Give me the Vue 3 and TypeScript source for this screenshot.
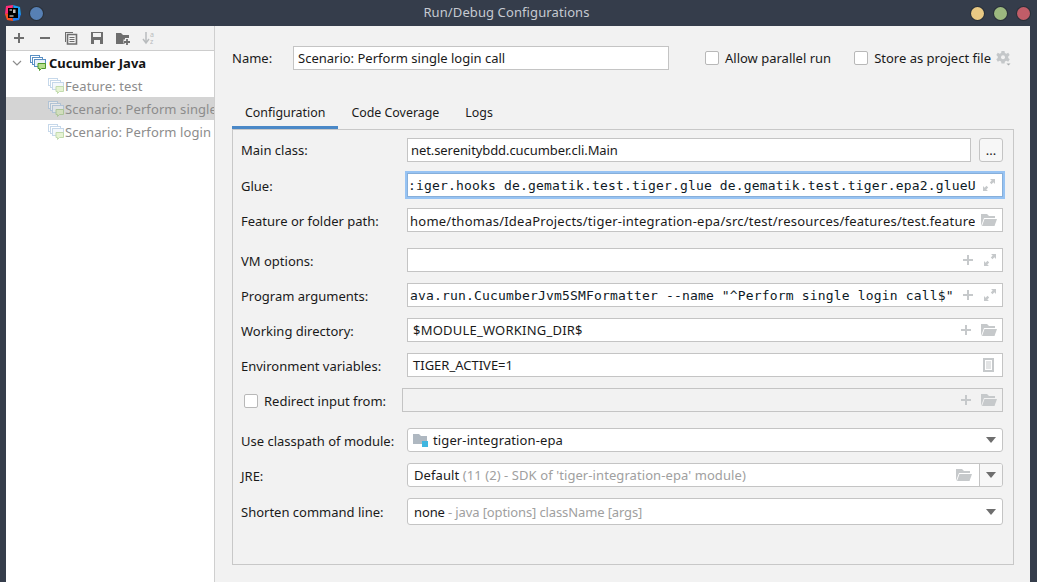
<script setup lang="ts">
const tabs = ["Configuration", "Code Coverage", "Logs"];
const treeChildren = [
  { label: "Feature: test", selected: false },
  { label: "Scenario: Perform single", selected: true },
  { label: "Scenario: Perform login", selected: false },
];
</script>

<template>
  <div class="window">
    <header class="titlebar">
      <div class="title-left">
        <svg class="app-logo" width="16" height="16" viewBox="0 0 16 16">
          <path d="M1 1 L8 0 L7 8 L0 9 Z" fill="#ff2d78" />
          <path d="M8 0 L15 2 L16 10 L10 9 Z" fill="#1b9cf0" />
          <path d="M0 9 L7 8 L8 16 L2 15 Z" fill="#f9501e" />
          <path d="M8 8 L16 9 L14 15 L8 16 Z" fill="#1b7cf0" />
          <rect x="3" y="3" width="10" height="10" fill="#000" />
          <rect x="4.500" y="10.500" width="4" height="1" fill="#fff" />
          <rect x="4.500" y="4.500" width="2.500" height="1" fill="#fff" />
          <rect x="8" y="4.500" width="2.500" height="3.500" fill="#fff" opacity="0.75" />
        </svg>
        <span class="pin"></span>
      </div>
      <div class="title-text">Run/Debug Configurations</div>
      <div class="win-buttons">
        <span class="dot yellow"></span>
        <span class="dot green"></span>
        <span class="dot red"></span>
      </div>
    </header>

    <div class="body">
      <aside class="sidebar">
        <div class="toolbar">
          <svg width="16" height="16" viewBox="0 0 16 16"><path d="M8 3v10M3 8h10" stroke="#6e6e6e" stroke-width="2" /></svg>
          <svg width="16" height="16" viewBox="0 0 16 16"><path d="M3 8h10" stroke="#6e6e6e" stroke-width="2" /></svg>
          <svg width="16" height="16" viewBox="0 0 16 16"><path d="M2 2h8v1H3v9H2z" fill="#6e6e6e" /><path d="M4.500 4.500h9v9.500h-9z" fill="none" stroke="#6e6e6e" stroke-width="1.600" /><path d="M6.500 7.500h5M6.500 9.500h5M6.500 11.500h5" stroke="#6e6e6e" /></svg>
          <svg width="16" height="16" viewBox="0 0 16 16"><path d="M2 2h12v12H2z" fill="#6e6e6e" /><rect x="4" y="3" width="8" height="4" fill="#f2f2f2" /><rect x="5" y="10" width="6" height="4" fill="#f2f2f2" /></svg>
          <svg width="16" height="16" viewBox="0 0 16 16"><path d="M1 3h5l2 2h6v9H1z" fill="#6e6e6e" /><path d="M12 8v7M8.500 11.500h7" stroke="#f2f2f2" stroke-width="4" /><path d="M12 9v6M9 12h6" stroke="#6e6e6e" stroke-width="1.800" /></svg>
          <div class="sort-icon">
            <svg width="16" height="16" viewBox="0 0 16 16"><path d="M5 2v10M2 9l3 4 3-4" fill="none" stroke="#b9bcbe" stroke-width="1.500" /></svg>
            <span class="sort-a">a</span>
            <span class="sort-z">z</span>
          </div>
        </div>
        <div class="tree">
          <div class="tree-row root">
            <svg class="chevron" width="10" height="6" viewBox="0 0 10 6"><path d="M1 1l4 4 4-4" fill="none" stroke="#8c8c8c" stroke-width="1.200" /></svg>
            <svg class="cfg-icon" width="16" height="16" viewBox="0 0 16 16">
              <rect x="0.500" y="0.500" width="9" height="7" fill="#fff" stroke="#5a90c4" />
              <rect x="2.500" y="2.500" width="10" height="7" fill="#fff" stroke="#5a90c4" />
              <rect x="4.500" y="4.500" width="11" height="7" fill="#eaf2fa" stroke="#5a90c4" />
              <path d="M8 8.500h7.500v5h-4l-2 2v-2H8z" fill="#b5de8c" stroke="#4d9a2a" />
            </svg>
            <span>Cucumber Java</span>
          </div>
          <div
            v-for="item in treeChildren"
            :key="item.label"
            class="tree-row child"
            :class="{ selected: item.selected }"
          >
            <svg class="cfg-icon" width="16" height="16" viewBox="0 0 16 16" opacity="0.5">
              <rect x="0.500" y="0.500" width="9" height="7" fill="#fff" stroke="#8fb3d6" />
              <rect x="2.500" y="2.500" width="10" height="7" fill="#fff" stroke="#8fb3d6" />
              <rect x="4.500" y="4.500" width="11" height="7" fill="#eaf2fa" stroke="#8fb3d6" />
              <path d="M8 8.500h7.500v5h-4l-2 2v-2H8z" fill="#cfe8a8" stroke="#86b860" />
            </svg>
            <span class="child-label">{{ item.label }}</span>
          </div>
        </div>
      </aside>

      <main class="content">
        <div class="name-row">
          <label class="name-label">Name:</label>
          <div class="field name-field">Scenario: Perform single login call</div>
          <span class="check-wrap allow"><span class="checkbox"></span>Allow parallel run</span>
          <span class="check-wrap store"><span class="checkbox"></span>Store as project file</span>
          <svg class="gear" width="15" height="15" viewBox="0 0 15 15">
            <path d="M5.500 0h3l.4 2 1.500.7 1.800-1 1.500 2.400-1.500 1.300v1.600l1.500 1.300-1.500 2.400-1.800-1-1.500.7-.4 2h-3l-.4-2-1.500-.7-1.800 1L.3 8.300l1.500-1.300V5.400L.3 4.100l1.500-2.400 1.800 1 1.500-.7z" fill="#c4c7c9" />
            <circle cx="7" cy="6.200" r="2" fill="#f2f2f2" />
            <path d="M10.500 12.500h4l-2 2z" fill="#a8abad" />
          </svg>
        </div>

        <nav class="tabs">
          <div v-for="(tab, i) in tabs" :key="tab" class="tab" :class="{ active: i === 0 }">{{ tab }}</div>
        </nav>

        <section class="panel">
          <div class="row">
            <label>Main class:</label>
            <div class="control with-btn">
              <div class="field grow"><span class="value tight">net.serenitybdd.cucumber.cli.Main</span></div>
              <div class="dots-btn">...</div>
            </div>
          </div>

          <div class="row lowered">
            <label>Glue:</label>
            <div class="field focused">
              <span class="value mono glue">:iger.hooks de.gematik.test.tiger.glue de.gematik.test.tiger.epa2.glueU</span>
              <svg class="ico" width="14" height="14" viewBox="0 0 14 14"><path d="M8 1h5v5L11.400 4.300 9.500 6.200 7.800 4.500 9.700 2.600zM6 13H1V8l1.600 1.700 1.900-1.900 1.700 1.700-1.900 1.900z" fill="#c6c9cb" /></svg>
            </div>
          </div>

          <div class="row gap-after lowered">
            <label>Feature or folder path:</label>
            <div class="field">
              <span class="value path">home/thomas/IdeaProjects/tiger-integration-epa/src/test/resources/features/test.feature</span>
              <svg class="ico folder" width="16" height="13" viewBox="0 0 16 13"><path d="M0 0h6l2 2h6v2H3L0 12z" fill="#c6c9cb" /><path d="M3.500 5H16l-2.500 7H1z" fill="#c6c9cb" /></svg>
            </div>
          </div>

          <div class="row lowered">
            <label>VM options:</label>
            <div class="field">
              <span class="value"></span>
              <svg class="ico plus" width="12" height="12" viewBox="0 0 12 12"><path d="M6 1v10M1 6h10" stroke="#c6c9cb" stroke-width="2" /></svg>
              <svg class="ico" width="14" height="14" viewBox="0 0 14 14"><path d="M8 1h5v5L11.400 4.300 9.500 6.200 7.800 4.500 9.700 2.600zM6 13H1V8l1.600 1.700 1.900-1.900 1.700 1.700-1.900 1.900z" fill="#c6c9cb" /></svg>
            </div>
          </div>

          <div class="row lowered">
            <label>Program arguments:</label>
            <div class="field">
              <span class="value mono args">ava.run.CucumberJvm5SMFormatter --name "^Perform single login call$"</span>
              <svg class="ico plus" width="12" height="12" viewBox="0 0 12 12"><path d="M6 1v10M1 6h10" stroke="#c6c9cb" stroke-width="2" /></svg>
              <svg class="ico" width="14" height="14" viewBox="0 0 14 14"><path d="M8 1h5v5L11.400 4.300 9.500 6.200 7.800 4.500 9.700 2.600zM6 13H1V8l1.600 1.700 1.900-1.900 1.700 1.700-1.900 1.900z" fill="#c6c9cb" /></svg>
            </div>
          </div>

          <div class="row lowered">
            <label>Working directory:</label>
            <div class="field">
              <span class="value inset wide">$MODULE_WORKING_DIR$</span>
              <svg class="ico plus" width="12" height="12" viewBox="0 0 12 12"><path d="M6 1v10M1 6h10" stroke="#c6c9cb" stroke-width="2" /></svg>
              <svg class="ico folder" width="16" height="13" viewBox="0 0 16 13"><path d="M0 0h6l2 2h6v2H3L0 12z" fill="#c6c9cb" /><path d="M3.500 5H16l-2.500 7H1z" fill="#c6c9cb" /></svg>
            </div>
          </div>

          <div class="row lowered">
            <label>Environment variables:</label>
            <div class="field">
              <span class="value inset">TIGER_ACTIVE=1</span>
              <svg class="ico doc" width="12" height="14" viewBox="0 0 12 14"><path d="M0 0h11v14H0z" fill="#c6c9cb" /><path d="M2 2h7v10H2z" fill="#fff" /><path d="M3 4h5M3 6h5M3 8h5M3 10h5" stroke="#c6c9cb" /></svg>
            </div>
          </div>

          <div class="row gap-after redirect lowered">
            <label class="check-label"><span class="checkbox"></span>Redirect input from:</label>
            <div class="field disabled">
              <span class="value"></span>
              <svg class="ico plus" width="12" height="12" viewBox="0 0 12 12"><path d="M6 1v10M1 6h10" stroke="#c6c9cb" stroke-width="2" /></svg>
              <svg class="ico folder" width="16" height="13" viewBox="0 0 16 13"><path d="M0 0h6l2 2h6v2H3L0 12z" fill="#c6c9cb" /><path d="M3.500 5H16l-2.500 7H1z" fill="#c6c9cb" /></svg>
            </div>
          </div>

          <div class="row lowered">
            <label>Use classpath of module:</label>
            <div class="field select">
              <svg class="module-ico" width="15" height="14" viewBox="0 0 15 14"><path d="M0 1h6l2 2h6v8H0z" fill="#afb8c1" /><rect x="9" y="8" width="6" height="6" fill="#40b6e0" /></svg>
              <span class="value module-name">tiger-integration-epa</span>
              <span class="caret"></span>
            </div>
          </div>

          <div class="row lowered">
            <label>JRE:</label>
            <div class="field select jre">
              <span class="value jre-text">Default <span class="muted">(11 (2) - SDK of 'tiger-integration-epa' module)</span></span>
              <svg class="ico folder jre-folder" width="16" height="13" viewBox="0 0 16 13"><path d="M0 0h6l2 2h6v2H3L0 12z" fill="#c6c9cb" /><path d="M3.500 5H16l-2.500 7H1z" fill="#c6c9cb" /></svg>
              <span class="jre-drop"><span class="caret"></span></span>
            </div>
          </div>

          <div class="row tall">
            <label>Shorten command line:</label>
            <div class="field select">
              <span class="value shorten">none <span class="muted">- java [options] className [args]</span></span>
              <span class="caret"></span>
            </div>
          </div>
        </section>
      </main>
    </div>
  </div>
</template>

<style>
html,
body {
  margin: 0;
  overflow: hidden;
  background: #353d4b;
}
</style>

<style scoped>
.window {
  width: 1037px;
  height: 582px;
  display: flex;
  flex-direction: column;
  background: #353d4b;
  font-family: "Noto Sans", sans-serif;
  font-size: 13px;
  color: #1a1a1a;
  overflow: hidden;
}

.titlebar {
  height: 26px;
  flex: none;
  display: flex;
  align-items: center;
  position: relative;
  color: #c6cad1;
}
.title-left {
  display: flex;
  align-items: center;
  padding-left: 5px;
  gap: 9px;
}
.pin {
  width: 13px;
  height: 13px;
  border-radius: 50%;
  background: #5780b4;
  box-shadow: 0 0 0 1px #293039;
}
.title-text {
  position: absolute;
  left: 0;
  right: 0;
  top: 3px;
  text-align: center;
  font-size: 13px;
  letter-spacing: 0.1px;
  line-height: 18px;
  margin-left: -24px;
}
.win-buttons {
  margin-left: auto;
  display: flex;
  gap: 10px;
  padding-right: 7px;
}
.dot {
  width: 13px;
  height: 13px;
  border-radius: 50%;
  box-shadow: 0 0 0 1px #293039;
}
.yellow { background: #e9c984; }
.green { background: #9cb87f; }
.red { background: #c05d68; }

.body {
  flex: 1;
  display: flex;
  margin: 0 7px 0 6px;
  background: #f2f2f2;
  min-height: 0;
}

.sidebar {
  width: 208px;
  flex: none;
  border-right: 1px solid #cfcfcf;
  display: flex;
  flex-direction: column;
  overflow: hidden;
}
.toolbar {
  height: 24px;
  flex: none;
  display: flex;
  align-items: center;
  gap: 10px;
  padding-left: 5px;
  border-bottom: 1px solid #cdcdcd;
  background: #f2f2f2;
}
.sort-icon {
  position: relative;
  width: 16px;
  height: 16px;
}
.sort-a,
.sort-z {
  position: absolute;
  left: 9px;
  font-size: 7px;
  line-height: 7px;
  color: #b9bcbe;
}
.sort-a { top: 1px; }
.sort-z { top: 8px; }

.tree {
  flex: 1;
  background: #fff;
}
.tree-row {
  height: 23px;
  display: flex;
  align-items: center;
  white-space: nowrap;
  overflow: hidden;
}
.tree-row.root {
  font-weight: 700;
  color: #141414;
  padding-left: 6px;
}
.chevron {
  margin-right: 8px;
  flex: none;
}
.root .cfg-icon {
  margin-right: 3px;
  flex: none;
}
.tree-row.child {
  padding-left: 42px;
  color: #8c8c8c;
}
.child .cfg-icon {
  flex: none;
  margin-right: 1px;
}
.child-label {
  letter-spacing: 0.1px;
}
.tree-row.selected {
  background: #d4d4d4;
}

.content {
  flex: 1;
  min-width: 0;
  padding: 20px 16px 17px 17px;
  display: flex;
  flex-direction: column;
}

.name-row {
  display: flex;
  align-items: center;
  height: 24px;
  flex: none;
}
.name-label {
  width: 61px;
  flex: none;
}
.name-field {
  width: 376px;
  flex: none;
  padding-left: 4px;
  line-height: 22px;
}
.check-wrap {
  display: flex;
  align-items: center;
  gap: 6px;
  white-space: nowrap;
}
.allow { margin-left: 36px; }
.store { margin-left: 23px; }
.gear { margin-left: 5px; flex: none; }

.checkbox {
  display: inline-block;
  width: 12px;
  height: 12px;
  border: 1px solid #b8b8b8;
  border-radius: 2px;
  background: #fff;
  flex: none;
}

.tabs {
  display: flex;
  margin-top: 25px;
  height: 34px;
  flex: none;
}
.tab {
  padding: 4px 13px 3px;
  display: flex;
  align-items: center;
  box-sizing: border-box;
  font-size: 12.4px;
}
.tab.active {
  border-bottom: 3px solid #4a88c7;
  padding-bottom: 0;
}

.panel {
  flex: 1;
  border: 1px solid #c8c8c8;
  padding: 8px 10px 0 8px;
  display: flex;
  flex-direction: column;
  gap: 11px;
}

.row {
  display: grid;
  grid-template-columns: 166px 1fr;
  height: 24px;
  align-items: center;
  flex: none;
}
.row.lowered > label {
  padding-top: 2px;
}
.row.gap-after {
  margin-bottom: 5px;
}
.row.tall {
  height: 27px;
}
.row.redirect {
  grid-template-columns: 161px 1fr;
}
.check-label {
  display: flex;
  align-items: center;
  gap: 6px;
  padding-left: 3px;
}

.control {
  display: flex;
  height: 100%;
  min-width: 0;
}
.with-btn {
  gap: 8px;
}
.grow {
  flex: 1;
}
.dots-btn {
  width: 22px;
  height: 22px;
  border: 1px solid #c4c4c4;
  border-radius: 3px;
  background: #f7f7f7;
  text-align: center;
  line-height: 22px;
  color: #222;
}

.field {
  box-sizing: border-box;
  height: 100%;
  min-width: 0;
  border: 1px solid #c4c4c4;
  background: #fff;
  display: flex;
  align-items: center;
  gap: 6px;
  padding-right: 5px;
  overflow: hidden;
  white-space: nowrap;
}
.field.focused {
  box-shadow: 0 0 0 2px #97c3f3;
  border-color: #87afda;
  padding-right: 6px;
}
.field.disabled {
  background: #f2f2f2;
}
.field.select {
  border-radius: 3px;
  padding-right: 0;
}
.value {
  flex: 1;
  min-width: 0;
  overflow: hidden;
  padding-left: 3px;
  color: #1a1a1a;
}
.tight {
  letter-spacing: -0.08px;
}
.inset {
  padding-left: 5px;
}
.wide {
  letter-spacing: 0.22px;
}
.path {
  padding-left: 2px;
  padding-top: 2px;
  letter-spacing: 0.24px;
}
.select .value {
  padding-left: 6px;
}
.select .jre-text {
  padding-left: 6px;
  letter-spacing: 0.08px;
}
.select .shorten {
  padding-left: 6px;
  letter-spacing: -0.12px;
}
.select .module-name {
  padding-left: 4px;
  letter-spacing: 0.12px;
}
.module-ico {
  margin-left: 5px;
  margin-right: -5px;
  flex: none;
}
.mono {
  font-family: "DejaVu Sans Mono", monospace;
  font-size: 13px;
  letter-spacing: 0.17px;
  color: #0e1a26;
}
.glue {
  padding-left: 0;
}
.args {
  padding-left: 2px;
}
.muted {
  color: #a0a0a0;
}
.ico {
  flex: none;
}
.plus {
  margin-right: 3px;
}
.doc {
  margin-right: 2px;
}
.caret {
  width: 0;
  height: 0;
  border-left: 5px solid transparent;
  border-right: 5px solid transparent;
  border-top: 6px solid #6e6e6e;
  margin-right: 6px;
  flex: none;
}
.jre-folder {
  margin-right: 1px;
}
.jre-drop {
  width: 22px;
  height: 100%;
  flex: none;
  border-left: 1px solid #c4c4c4;
  background: #f7f7f7;
  display: flex;
  align-items: center;
  justify-content: center;
}
.jre-drop .caret {
  margin-right: 0;
}
</style>
